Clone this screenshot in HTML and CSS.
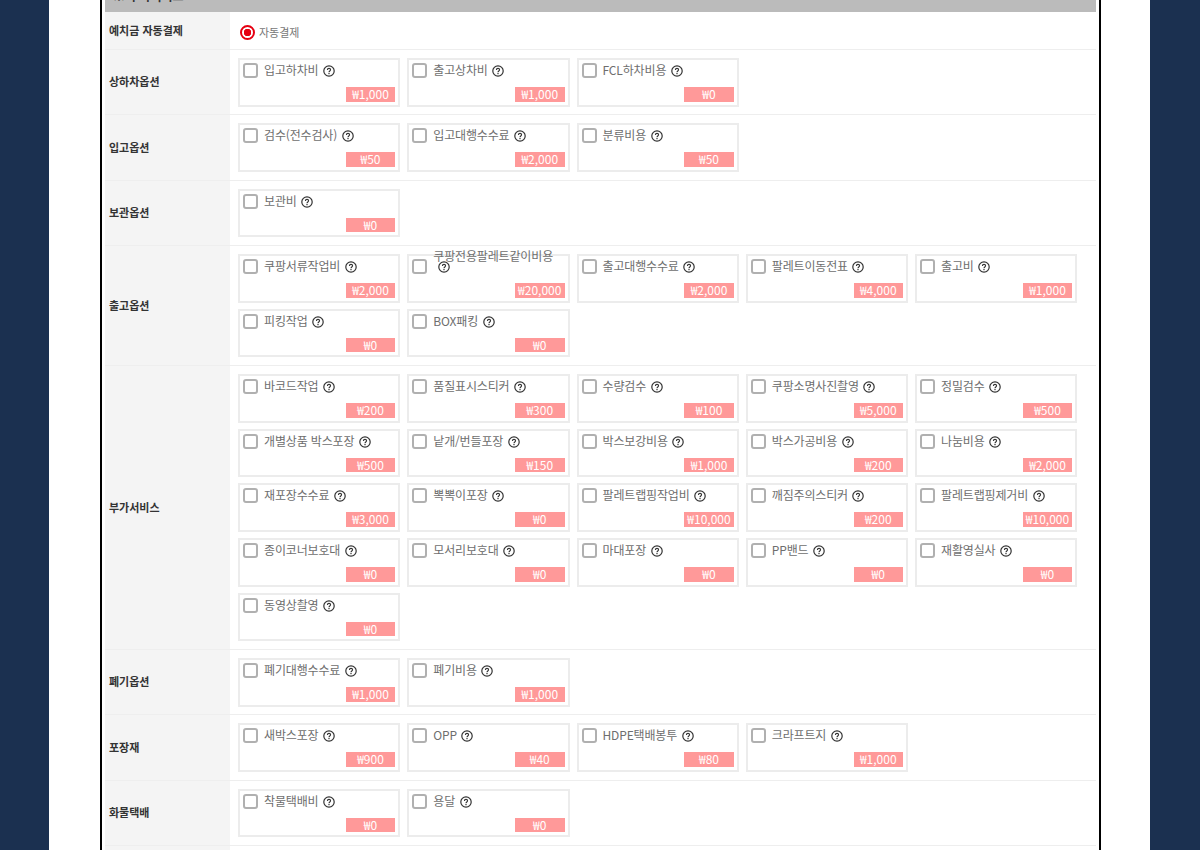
FILE: index.html
```html
<!DOCTYPE html>
<html lang="ko">
<head>
<meta charset="utf-8">
<title>부가서비스</title>
<link rel="stylesheet" href="styles.css">
</head>
<body>
<svg class="defs" width="0" height="0" aria-hidden="true"><defs>
<symbol id="q" viewBox="0 0 12 12"><circle cx="6" cy="6" r="5.2" fill="none" stroke="#333" stroke-width="1.2"/><path d="M4.4 4.9c0-1 .7-1.5 1.6-1.5s1.6.6 1.6 1.4c0 1.2-1.6 1.2-1.6 2.4" fill="none" stroke="#333" stroke-width="1.1"/><rect x="5.4" y="8" width="1.2" height="1.2" fill="#333"/></symbol>
</defs></svg>
<div class="page">
<div class="frame">
<div class="head"><span class="head-text">※ 부가서비스</span></div>

<div class="row first"><div class="th">예치금 자동결제</div><div class="radio-cell"><span class="radio"></span><span class="radio-text">자동결제</span></div></div>

<div class="row"><div class="th">상하차옵션</div><div class="td">
<div class="card"><div class="line"><span class="box"></span><span class="name">입고하차비<svg class="q"><use href="#q"/></svg></span></div><span class="price">₩1,000</span></div>
<div class="card"><div class="line"><span class="box"></span><span class="name">출고상차비<svg class="q"><use href="#q"/></svg></span></div><span class="price">₩1,000</span></div>
<div class="card"><div class="line"><span class="box"></span><span class="name">FCL하차비용<svg class="q"><use href="#q"/></svg></span></div><span class="price">₩0</span></div>
</div></div>

<div class="row"><div class="th">입고옵션</div><div class="td">
<div class="card"><div class="line"><span class="box"></span><span class="name">검수(전수검사)<svg class="q"><use href="#q"/></svg></span></div><span class="price">₩50</span></div>
<div class="card"><div class="line"><span class="box"></span><span class="name">입고대행수수료<svg class="q"><use href="#q"/></svg></span></div><span class="price">₩2,000</span></div>
<div class="card"><div class="line"><span class="box"></span><span class="name">분류비용<svg class="q"><use href="#q"/></svg></span></div><span class="price">₩50</span></div>
</div></div>

<div class="row"><div class="th">보관옵션</div><div class="td">
<div class="card"><div class="line"><span class="box"></span><span class="name">보관비<svg class="q"><use href="#q"/></svg></span></div><span class="price">₩0</span></div>
</div></div>

<div class="row"><div class="th">출고옵션</div><div class="td">
<div class="card"><div class="line"><span class="box"></span><span class="name">쿠팡서류작업비<svg class="q"><use href="#q"/></svg></span></div><span class="price">₩2,000</span></div>
<div class="card"><div class="line"><span class="box"></span><span class="name">쿠팡전용팔레트같이비용<svg class="q"><use href="#q"/></svg></span></div><span class="price">₩20,000</span></div>
<div class="card"><div class="line"><span class="box"></span><span class="name">출고대행수수료<svg class="q"><use href="#q"/></svg></span></div><span class="price">₩2,000</span></div>
<div class="card"><div class="line"><span class="box"></span><span class="name">팔레트이동전표<svg class="q"><use href="#q"/></svg></span></div><span class="price">₩4,000</span></div>
<div class="card"><div class="line"><span class="box"></span><span class="name">출고비<svg class="q"><use href="#q"/></svg></span></div><span class="price">₩1,000</span></div>
<div class="card"><div class="line"><span class="box"></span><span class="name">피킹작업<svg class="q"><use href="#q"/></svg></span></div><span class="price">₩0</span></div>
<div class="card"><div class="line"><span class="box"></span><span class="name">BOX패킹<svg class="q"><use href="#q"/></svg></span></div><span class="price">₩0</span></div>
</div></div>

<div class="row"><div class="th">부가서비스</div><div class="td">
<div class="card"><div class="line"><span class="box"></span><span class="name">바코드작업<svg class="q"><use href="#q"/></svg></span></div><span class="price">₩200</span></div>
<div class="card"><div class="line"><span class="box"></span><span class="name">품질표시스티커<svg class="q"><use href="#q"/></svg></span></div><span class="price">₩300</span></div>
<div class="card"><div class="line"><span class="box"></span><span class="name">수량검수<svg class="q"><use href="#q"/></svg></span></div><span class="price">₩100</span></div>
<div class="card"><div class="line"><span class="box"></span><span class="name">쿠팡소명사진촬영<svg class="q"><use href="#q"/></svg></span></div><span class="price">₩5,000</span></div>
<div class="card"><div class="line"><span class="box"></span><span class="name">정밀검수<svg class="q"><use href="#q"/></svg></span></div><span class="price">₩500</span></div>
<div class="card"><div class="line"><span class="box"></span><span class="name">개별상품 박스포장<svg class="q"><use href="#q"/></svg></span></div><span class="price">₩500</span></div>
<div class="card"><div class="line"><span class="box"></span><span class="name">낱개/번들포장<svg class="q"><use href="#q"/></svg></span></div><span class="price">₩150</span></div>
<div class="card"><div class="line"><span class="box"></span><span class="name">박스보강비용<svg class="q"><use href="#q"/></svg></span></div><span class="price">₩1,000</span></div>
<div class="card"><div class="line"><span class="box"></span><span class="name">박스가공비용<svg class="q"><use href="#q"/></svg></span></div><span class="price">₩200</span></div>
<div class="card"><div class="line"><span class="box"></span><span class="name">나눔비용<svg class="q"><use href="#q"/></svg></span></div><span class="price">₩2,000</span></div>
<div class="card"><div class="line"><span class="box"></span><span class="name">재포장수수료<svg class="q"><use href="#q"/></svg></span></div><span class="price">₩3,000</span></div>
<div class="card"><div class="line"><span class="box"></span><span class="name">뽁뽁이포장<svg class="q"><use href="#q"/></svg></span></div><span class="price">₩0</span></div>
<div class="card"><div class="line"><span class="box"></span><span class="name">팔레트랩핑작업비<svg class="q"><use href="#q"/></svg></span></div><span class="price">₩10,000</span></div>
<div class="card"><div class="line"><span class="box"></span><span class="name">깨짐주의스티커<svg class="q"><use href="#q"/></svg></span></div><span class="price">₩200</span></div>
<div class="card"><div class="line"><span class="box"></span><span class="name">팔레트랩핑제거비<svg class="q"><use href="#q"/></svg></span></div><span class="price">₩10,000</span></div>
<div class="card"><div class="line"><span class="box"></span><span class="name">종이코너보호대<svg class="q"><use href="#q"/></svg></span></div><span class="price">₩0</span></div>
<div class="card"><div class="line"><span class="box"></span><span class="name">모서리보호대<svg class="q"><use href="#q"/></svg></span></div><span class="price">₩0</span></div>
<div class="card"><div class="line"><span class="box"></span><span class="name">마대포장<svg class="q"><use href="#q"/></svg></span></div><span class="price">₩0</span></div>
<div class="card"><div class="line"><span class="box"></span><span class="name">PP밴드<svg class="q"><use href="#q"/></svg></span></div><span class="price">₩0</span></div>
<div class="card"><div class="line"><span class="box"></span><span class="name">재활영실사<svg class="q"><use href="#q"/></svg></span></div><span class="price">₩0</span></div>
<div class="card"><div class="line"><span class="box"></span><span class="name">동영상촬영<svg class="q"><use href="#q"/></svg></span></div><span class="price">₩0</span></div>
</div></div>

<div class="row"><div class="th">폐기옵션</div><div class="td">
<div class="card"><div class="line"><span class="box"></span><span class="name">폐기대행수수료<svg class="q"><use href="#q"/></svg></span></div><span class="price">₩1,000</span></div>
<div class="card"><div class="line"><span class="box"></span><span class="name">폐기비용<svg class="q"><use href="#q"/></svg></span></div><span class="price">₩1,000</span></div>
</div></div>

<div class="row"><div class="th">포장재</div><div class="td">
<div class="card"><div class="line"><span class="box"></span><span class="name">새박스포장<svg class="q"><use href="#q"/></svg></span></div><span class="price">₩900</span></div>
<div class="card"><div class="line"><span class="box"></span><span class="name">OPP<svg class="q"><use href="#q"/></svg></span></div><span class="price">₩40</span></div>
<div class="card"><div class="line"><span class="box"></span><span class="name">HDPE택배봉투<svg class="q"><use href="#q"/></svg></span></div><span class="price">₩80</span></div>
<div class="card"><div class="line"><span class="box"></span><span class="name">크라프트지<svg class="q"><use href="#q"/></svg></span></div><span class="price">₩1,000</span></div>
</div></div>

<div class="row"><div class="th">화물택배</div><div class="td">
<div class="card"><div class="line"><span class="box"></span><span class="name">착물택배비<svg class="q"><use href="#q"/></svg></span></div><span class="price">₩0</span></div>
<div class="card"><div class="line"><span class="box"></span><span class="name">용달<svg class="q"><use href="#q"/></svg></span></div><span class="price">₩0</span></div>
</div></div>

<div class="row last"><div class="th"></div><div class="td"></div></div>
</div>
</div>
</body>
</html>
```
FILE: styles.css
```css
html, body {
  margin: 0;
  height: 850px;
  overflow: hidden;
}
body {
  background: #1b3050;
  font-family: "Noto Sans CJK KR", "Noto Sans", sans-serif;
  font-size: 12px;
}
.defs {
  display: block;
  height: 0;
}
.page {
  box-sizing: border-box;
  width: 1101px;
  height: 850px;
  margin-left: 49px;
  padding: 0 49.5px 0 51px;
  background: #fff;
}
.frame {
  box-sizing: border-box;
  height: 850px;
  padding: 0 3px;
  border-left: 2.5px solid #000;
  border-right: 2.5px solid #000;
  overflow: hidden;
}
.head {
  display: flex;
  align-items: flex-end;
  height: 12px;
  padding-left: 8px;
  overflow: hidden;
  background: #bbb;
}
.head-text {
  margin-bottom: 6px;
  line-height: 20px;
  font-size: 12px;
  font-weight: 700;
  color: #333;
}
.row {
  display: grid;
  grid-template-columns: 125px 1fr;
  border-bottom: 1px solid #eee;
}
.first {
  height: 37px;
}
.last {
  height: 60px;
}
.th {
  display: flex;
  align-items: center;
  padding: 0 0 2px 4px;
  background: #f4f4f4;
  font-size: 11px;
  font-weight: 700;
  color: #333;
}
.radio-cell {
  display: flex;
  align-items: center;
  gap: 4px;
  padding: 3px 0 0 10px;
  font-size: 11px;
  color: #777;
}
.radio {
  box-sizing: border-box;
  width: 15px;
  height: 15px;
  border: 2px solid #e60012;
  border-radius: 50%;
  background: radial-gradient(circle, #e60012 0 3.5px, #fff 4px);
}
.td {
  display: flex;
  flex-wrap: wrap;
  align-content: flex-start;
  gap: 6px 7px;
  padding: 8px 0 7.8px 8px;
}
.card {
  box-sizing: border-box;
  display: flex;
  flex-direction: column;
  justify-content: space-between;
  align-items: flex-end;
  width: 162.25px;
  height: 48.6px;
  padding: 2px 3px 3px 3px;
  border: 2px solid #ececec;
}
.line {
  display: flex;
  align-items: flex-end;
  align-self: stretch;
  height: 16px;
}
.box {
  box-sizing: border-box;
  flex: none;
  width: 15px;
  height: 15px;
  margin-right: 6px;
  border: 2px solid #b0b0b0;
  border-radius: 3px;
  background: #fff;
}
.name {
  max-width: 126px;
  line-height: 10px;
  padding-bottom: 1px;
  letter-spacing: -0.15px;
  color: #6e6e6e;
}
.q {
  width: 12px;
  height: 12px;
  margin-left: 4.5px;
  vertical-align: -2px;
}
.price {
  box-sizing: border-box;
  min-width: 49.5px;
  height: 14.5px;
  padding: 0 2px;
  background: #ff9999;
  color: #fff;
  font-size: 12px;
  line-height: 14px;
  text-align: center;
}
```
